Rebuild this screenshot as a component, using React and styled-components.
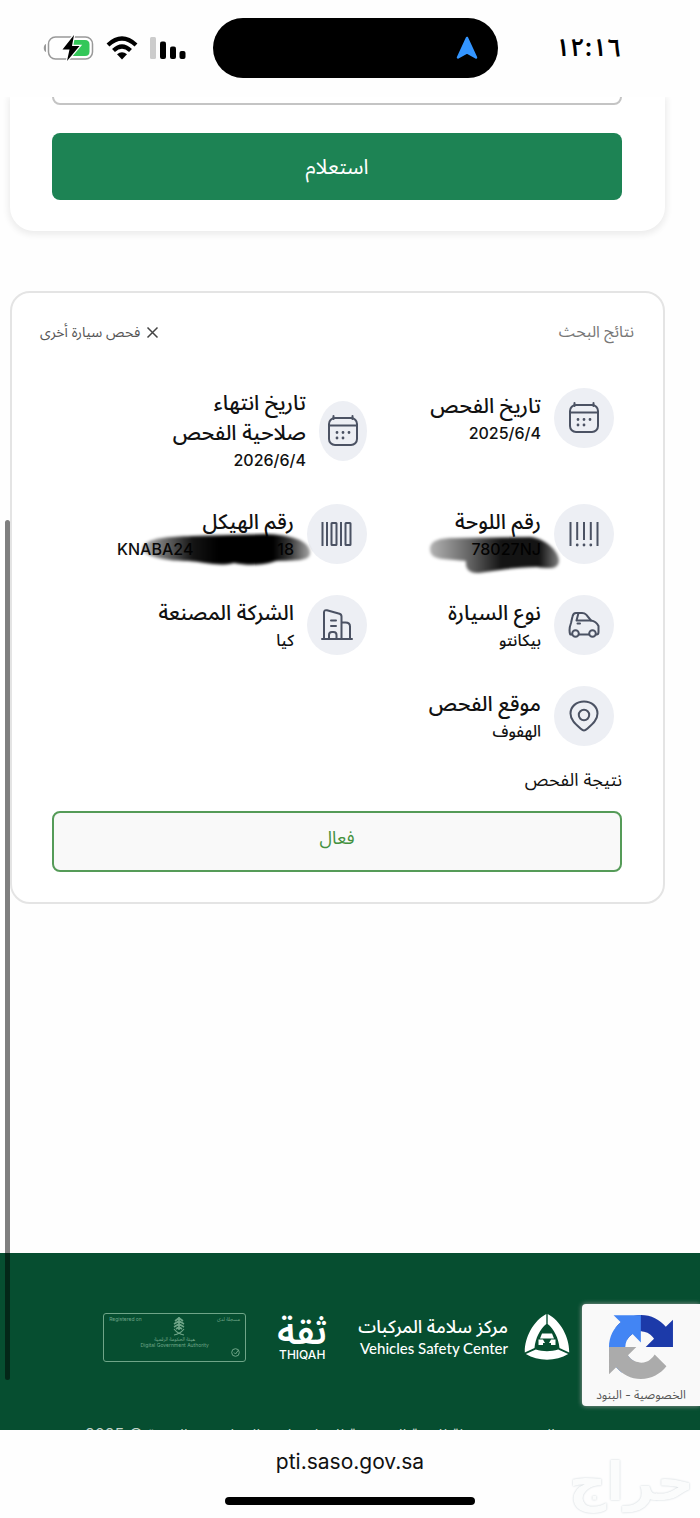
import React from "react";
import styled, { createGlobalStyle } from "styled-components";

const GlobalStyle = createGlobalStyle`
  * {
    box-sizing: border-box;
  }

  body {
    margin: 0;
    background-color: #fefefe;
    color: #111;
    font-family: Inter, "Noto Sans Arabic", "DejaVu Sans", sans-serif;
  }
`;

const Page = styled.div`
  position: relative;
  display: flex;
  flex-direction: column;
  min-height: 100vh;
  overflow: hidden;
`;

const StatusBar = styled.header`
  display: grid;
  grid-template-columns: 1fr 285px 1fr;
  align-items: center;
  height: 97px;
  padding: 0 33px 2px 43px;
  direction: ltr;
`;

const StatusIcons = styled.div`
  display: flex;
  align-items: center;
  gap: 12px;
`;

const Island = styled.div`
  display: flex;
  align-items: center;
  justify-content: flex-end;
  height: 60px;
  padding-right: 20px;
  border-radius: 30px;
  background-color: #000;
`;

const Clock = styled.time`
  justify-self: end;
  padding-right: 46px;
  color: #000;
  font-size: 25px;
  font-weight: 600;
`;

const Main = styled.main`
  flex: 1;
  padding: 0 35px 0 10px;
`;

const SearchCard = styled.form`
  padding: 0 43px 31px 42px;
  border-radius: 0 0 24px 24px;
  background-color: #fff;
  box-shadow: 0 2px 6px 2px rgba(0, 0, 0, 0.07);
  clip-path: inset(0 -12px -12px -12px);
`;

const FieldClip = styled.div`
  display: flex;
  align-items: flex-end;
  height: 8px;
  overflow: hidden;
`;

const Field = styled.input`
  flex: 1;
  flex-shrink: 0;
  height: 60px;
  border: 2px solid #c4c4c4;
  border-radius: 8px;
  background-color: #fff;
  outline: none;
`;

const SubmitButton = styled.button`
  display: block;
  width: 100%;
  height: 67px;
  margin-top: 28px;
  border: none;
  border-radius: 8px;
  background-color: #1d8354;
  color: #fff;
  font-family: inherit;
  font-size: 21px;
  cursor: pointer;
`;

const ResultCard = styled.section`
  margin-top: 60px;
  padding: 23px 29px 30px 28px;
  border: 2px solid #e4e4e4;
  border-radius: 20px;
  background-color: #fff;
`;

const ResultHeader = styled.div`
  display: flex;
  align-items: center;
  justify-content: space-between;
  height: 32px;
`;

const ResultTitle = styled.h2`
  margin: 0;
  color: #777;
  font-size: 16px;
  font-weight: 400;
`;

const ResetButton = styled.button`
  display: flex;
  align-items: center;
  gap: 6px;
  padding: 0;
  border: none;
  background: none;
  color: #555;
  font-family: inherit;
  font-size: 14px;
  cursor: pointer;
`;

const DetailGrid = styled.dl`
  display: grid;
  grid-template-columns: 247px 1fr;
  align-items: start;
  gap: 31px 0;
  margin: 40px 20px 0 0;
`;

const Detail = styled.div`
  display: flex;
  align-items: center;
  gap: 13px;
`;

const IconCircle = styled.div`
  display: flex;
  flex-shrink: 0;
  align-items: center;
  justify-content: center;
  width: ${({ $narrow }) => ($narrow ? "48px" : "60px")};
  height: 60px;
  border-radius: 50%;
  background-color: #edeff4;
`;

const DetailText = styled.div`
  position: relative;
`;

const DetailLabel = styled.dt`
  color: #111;
  font-size: 21px;
  font-weight: 500;
  line-height: 30px;
  white-space: nowrap;
`;

const DetailValue = styled.dd`
  display: flex;
  justify-content: ${({ $spread }) => ($spread ? "space-between" : "flex-start")};
  width: ${({ $spread }) => ($spread ? "177px" : "auto")};
  margin: 0;
  direction: ${({ $spread }) => ($spread ? "ltr" : "rtl")};
  color: #111;
  font-size: 16px;
  font-weight: 500;
  line-height: 25px;
`;

const Scribble = styled.svg`
  position: absolute;
  top: 25px;
  right: -22px;
`;

const StatusLabel = styled.h3`
  margin: 20px 12px 0 0;
  font-size: 18px;
  font-weight: 400;
  line-height: 28px;
`;

const StatusBox = styled.div`
  height: 61px;
  margin: 17px 12px 0;
  border: 2px solid #559b58;
  border-radius: 8px;
  background-color: #f9f9f9;
  color: #45913f;
  font-size: 18px;
  line-height: 50px;
  text-align: center;
`;

const Footer = styled.footer`
  position: relative;
  height: 177px;
  padding: 56px 130px 0 0;
  background-color: #064e30;
  color: #fff;
`;

const FooterLogos = styled.div`
  display: flex;
  align-items: center;
  gap: 29px;
  height: 56px;
`;

const CenterLogo = styled.a`
  display: flex;
  align-items: center;
  gap: 16px;
  color: inherit;
  text-decoration: none;
`;

const CenterName = styled.span`
  display: flex;
  flex-direction: column;
  font-family: Lato, "Noto Sans Arabic", "DejaVu Sans", sans-serif;
  font-size: 15px;
  font-weight: 500;
  line-height: 22px;
  white-space: nowrap;
`;

const CenterArabic = styled.span`
  font-size: 18px;
`;

const ThiqahLogo = styled.a`
  display: flex;
  flex-direction: column;
  align-items: center;
  width: 54px;
  color: inherit;
  text-decoration: none;
`;

const ThiqahArabic = styled.span`
  font-size: 36px;
  font-weight: 600;
  line-height: 36px;
`;

const ThiqahLatin = styled.span`
  font-size: 12px;
  font-weight: 500;
  line-height: 12px;
`;

const Registered = styled.div`
  display: flex;
  flex-direction: column;
  align-items: center;
  width: 143px;
  height: 49px;
  padding: 2px 5px;
  border: 1px solid #6fa588;
  border-radius: 3px;
  color: #6fa588;
  font-size: 5px;
  line-height: 6px;
`;

const RegisteredTop = styled.div`
  display: flex;
  justify-content: space-between;
  width: 100%;
`;

const RegisteredSeal = styled.svg`
  align-self: flex-start;
`;

const Copyright = styled.p`
  height: 8px;
  margin: 57px 15px 0 0;
  overflow: hidden;
  color: #c3d5cb;
  font-size: 16px;
  line-height: 24px;
  white-space: nowrap;
`;

const CaptchaBadge = styled.aside`
  position: absolute;
  top: 51px;
  right: 0;
  display: flex;
  flex-direction: column;
  align-items: center;
  width: 118px;
  height: 102px;
  padding-top: 11px;
  border-radius: 4px 0 0 4px;
  background-color: #f9f9f9;
  box-shadow: 0 0 5px #999;
`;

const CaptchaLinks = styled.div`
  margin-top: 7px;
  color: #555;
  font-size: 12px;
  line-height: 18px;
  white-space: nowrap;

  a {
    color: inherit;
    text-decoration: none;
  }
`;

const AddressBar = styled.div`
  position: relative;
  display: flex;
  flex-direction: column;
  align-items: center;
  height: 88px;
  padding-top: 16px;
  background-color: #fefefe;
`;

const Address = styled.a`
  color: #111;
  font-size: 21px;
  line-height: 32px;
  text-decoration: none;
`;

const HomeIndicator = styled.div`
  width: 250px;
  height: 8px;
  margin-top: 19px;
  border-radius: 4px;
  background-color: #000;
`;

const Watermark = styled.span`
  position: absolute;
  right: 6px;
  bottom: 8px;
  color: #fbfcfc;
  font-family: "DejaVu Sans", sans-serif;
  font-size: 52px;
  font-weight: 700;
  line-height: 56px;
  text-shadow: 0 0 2px #c3ccd2;
`;

const ScrollThumb = styled.div`
  position: absolute;
  top: 520px;
  left: 5px;
  width: 5px;
  height: 860px;
  border-radius: 3px;
  background-color: rgba(0, 0, 0, 0.5);
`;

const LineIcon = ({ children }) => (
  <svg
    width="32"
    height="32"
    viewBox="0 0 32 32"
    fill="none"
    stroke="#4b5263"
    strokeWidth="2"
    strokeLinecap="round"
    strokeLinejoin="round"
    aria-hidden="true"
  >
    {children}
  </svg>
);

const CalendarIcon = () => (
  <LineIcon>
    <rect x="2" y="3" width="28" height="27" rx="6" />
    <path d="M2 10.500h28M6.500 1v3M25.500 1v3" />
    <path
      d="M10 17.500h.01M16 17.500h.01M22 17.500h.01M10 23h.01M16 23h.01"
      strokeWidth="2.800"
    />
  </LineIcon>
);

const PlateIcon = () => (
  <LineIcon>
    <path d="M2.500 4v24M9.200 4v18M16 4v18M22.800 4v18M29.500 4v24" strokeLinecap="butt" />
    <path d="M9.200 27h.01M16 27h.01M22.800 27h.01" strokeWidth="2.800" />
  </LineIcon>
);

const ChassisIcon = () => (
  <LineIcon>
    <path d="M1.500 4v24M6 4v24M20 4v24" strokeLinecap="butt" />
    <rect x="10.500" y="5" width="5" height="22" rx="0.500" />
    <rect x="24.500" y="5" width="5" height="22" rx="0.500" />
  </LineIcon>
);

const CarIcon = () => (
  <LineIcon>
    <path d="M4 25.500H2.200C1 22 1.500 18 3 14L4.500 7.500C5 5 6 4 8 4h6c2 0 3 .4 4.200 1.600L23 11.500c4 .6 6 2.500 7.500 5.500v6c0 1.500-.5 2.500-2 2.500M11 25.500h10" />
    <path d="M10.500 4L8.500 11.500H23M9.500 14.500h2.500" />
    <circle cx="7.500" cy="24.500" r="3.300" />
    <circle cx="24.500" cy="24.500" r="3.300" />
  </LineIcon>
);

const BuildingIcon = () => (
  <LineIcon>
    <path d="M1 30h30M3 30V3.500C3 1.500 4 .8 6 1.300l12.500 3.400c1.500.4 2 1 2 2.800V30M20.500 13.500h4c3 0 4.500 1 4.500 4V30" />
    <path d="M10 11.500h5M10 17h5M8 30v-4c0-2 1-3 3-3h1.500c2 0 3 1 3 3v4" />
  </LineIcon>
);

const PinIcon = () => (
  <LineIcon>
    <path d="M16 30.500c-1.200 0-2.200-.8-3.200-1.700C7 23.500 2.500 19.500 2.500 13.500 2.500 6.500 8.500 1.500 16 1.500s13.500 5 13.500 12c0 6-4.500 10-10.300 15.300-1 .9-2 1.700-3.200 1.700z" />
    <circle cx="16" cy="15" r="5.200" />
  </LineIcon>
);

const BatteryIcon = () => (
  <svg width="51" height="28" viewBox="0 0 51 28" aria-hidden="true">
    <path d="M3 10C0 11 0 17 3 18z" fill="#999" />
    <rect x="5.500" y="3" width="44" height="22" rx="7" fill="#fff" stroke="#999" strokeWidth="1.500" />
    <path d="M29 6h13c3 0 4.500 1.500 4.500 4.500v7c0 3-1.500 4.500-4.500 4.500H27z" fill="#34c759" />
    <path
      d="M31 1L19.500 15.500h7L24 27 36.500 12h-7.500z"
      fill="#000"
      stroke="#fff"
      strokeWidth="2.500"
      paintOrder="stroke"
    />
  </svg>
);

const WifiIcon = () => (
  <svg width="32" height="24" viewBox="0 0 32 24" aria-hidden="true">
    <path d="M2 9Q16-4 30 9M7.500 14.500Q16 6.500 24.500 14.500" fill="none" stroke="#000" strokeWidth="4.200" />
    <path d="M11 18.300Q16 14 21 18.300L16 23.500z" fill="#000" />
  </svg>
);

const SignalIcon = () => (
  <svg width="36" height="24" viewBox="0 0 36 24" aria-hidden="true">
    <rect x="0" y="1" width="6" height="22" rx="1.500" fill="#ccc" />
    <rect x="10" y="5.500" width="6" height="17.500" rx="2" />
    <rect x="20" y="10.500" width="6" height="12.500" rx="2" />
    <rect x="29.500" y="15" width="6" height="8" rx="2" />
  </svg>
);

const LocationIcon = () => (
  <svg width="22" height="24" viewBox="0 0 22 24" aria-hidden="true">
    <path
      d="M11 2L20 21.500 11 16.500 2 21.500z"
      fill="#3395ff"
      stroke="#3395ff"
      strokeWidth="2.500"
      strokeLinejoin="round"
    />
  </svg>
);

const SafetyLogo = () => (
  <svg width="46" height="48" viewBox="0 0 46 48" aria-hidden="true">
    <path
      d="M22.300 1v10C16 16 11.500 25 10.500 35L.8 39.500C.5 25 9 8 22.300 1zM23.700 1v10c6.300 5 10.800 14 11.800 24l9.700 4.500C45.500 25 37 8 23.700 1zM1.800 41l10-4.500c7 2.300 15.400 2.300 22.400 0l10 4.500C32 48.500 14 48.500 1.800 41z"
      fill="#fff"
    />
    <path d="M18 20.500h10l2 5H16zM14.500 26.500h4.500l2 3.500h-2v2h-4.500zM31.500 26.500H27l-2 3.500h2v2h4.500z" fill="#fff" />
  </svg>
);

const CaptchaLogo = () => (
  <svg width="64" height="64" viewBox="0 0 64 64" aria-hidden="true">
    <path
      fill="#1c3aa9"
      d="M64 31.955l-.033-1.370V4.687l-7.160 7.160C50.948 4.674 42.033.093 32.050.093c-10.400 0-19.622 4.960-25.458 12.640l11.736 11.860a15.550 15.550 0 0 1 4.754-5.334c2.050-1.600 4.952-2.906 8.968-2.906.485 0 .860.057 1.135.163 4.976.393 9.288 3.140 11.828 7.124l-8.307 8.307L64 31.953"
    />
    <path
      fill="#4285f4"
      d="M31.862.094l-1.370.033H4.594l7.160 7.160C4.580 13.147 0 22.060 0 32.046c0 10.400 4.960 19.622 12.640 25.458L24.500 45.768a15.550 15.550 0 0 1-5.334-4.754c-1.600-2.050-2.906-4.952-2.906-8.968 0-.485.057-.860.163-1.135.393-4.976 3.140-9.288 7.124-11.828l8.307 8.307L31.860.095"
    />
    <path
      fill="#ababab"
      d="M.001 32.045l.033 1.370v25.898l7.160-7.160c5.860 7.173 14.774 11.754 24.760 11.754 10.400 0 19.622-4.960 25.458-12.640l-11.736-11.860a15.550 15.550 0 0 1-4.754 5.334c-2.050 1.600-4.952 2.906-8.968 2.906-.485 0-.860-.057-1.135-.163-4.976-.393-9.288-3.140-11.828-7.124l8.307-8.307c-10.522.040-22.400.066-27.295-.005"
    />
  </svg>
);

const EmblemIcon = () => (
  <svg width="14" height="20" viewBox="0 0 14 20" fill="none" stroke="#6fa588" aria-hidden="true">
    <path d="M7 1v13M7 2L3 5M7 2l4 3M7 5L2 8M7 5l5 3M7 8l-5 3M7 8l5 3M7 11l-3 2M7 11l3 2" strokeWidth="1.600" />
    <path d="M2 13q4 5 10 6M12 13q-4 5-10 6" strokeWidth="1.200" />
  </svg>
);

const PlateScribble = () => (
  <Scribble width="136" height="44" viewBox="0 0 136 44" aria-hidden="true">
    <defs>
      <filter id="plateSoft" x="-10%" y="-20%" width="120%" height="140%">
        <feGaussianBlur stdDeviation="1.5" />
      </filter>
      <linearGradient id="plateInk">
        <stop offset="0" stopColor="#000" stopOpacity="0.3" />
        <stop offset="0.300" stopColor="#000" stopOpacity="0.6" />
        <stop offset="0.550" stopColor="#000" stopOpacity="0.92" />
        <stop offset="0.850" stopColor="#000" stopOpacity="0.92" />
        <stop offset="1" stopColor="#000" stopOpacity="0.500" />
      </linearGradient>
    </defs>
    <path
      d="M3 17C3 8 14 6 28 6L104 5C118 7 131 18 132 28C132 37 124 37 110 35C92 35 70 38 52 41C42 42 38 36 39 29L15 27C7 26 3 23 3 17z"
      fill="url(#plateInk)"
      filter="url(#plateSoft)"
    />
  </Scribble>
);

const ChassisScribble = () => (
  <Scribble width="180" height="44" viewBox="0 0 180 44" aria-hidden="true">
    <defs>
      <filter id="chassisSoft" x="-10%" y="-20%" width="120%" height="140%">
        <feGaussianBlur stdDeviation="1.5" />
      </filter>
      <linearGradient id="chassisInk">
        <stop offset="0" stopColor="#000" stopOpacity="0.3" />
        <stop offset="0.300" stopColor="#000" stopOpacity="0.92" />
        <stop offset="0.450" stopColor="#000" />
        <stop offset="0.780" stopColor="#000" />
        <stop offset="0.880" stopColor="#000" stopOpacity="0.78" />
        <stop offset="1" stopColor="#000" stopOpacity="0.35" />
      </linearGradient>
    </defs>
    <path
      d="M6 16C10 5 34 5 56 4L130 2C154 3 172 8 174 19C176 30 160 28 140 29C130 33 112 34 98 31C82 35 68 30 52 29C34 29 8 26 6 16z"
      fill="url(#chassisInk)"
      filter="url(#chassisSoft)"
    />
  </Scribble>
);

const details = [
  { label: "تاريخ الفحص", value: "2025/6/4", icon: <CalendarIcon /> },
  {
    label: (
      <>
        تاريخ انتهاء
        <br />
        صلاحية الفحص
      </>
    ),
    value: "2026/6/4",
    icon: <CalendarIcon />,
    narrow: true,
  },
  {
    label: "رقم اللوحة",
    value: "78027NJ",
    icon: <PlateIcon />,
    scribble: <PlateScribble />,
  },
  {
    label: "رقم الهيكل",
    value: (
      <>
        <span>KNABA24</span>
        <span>18</span>
      </>
    ),
    icon: <ChassisIcon />,
    scribble: <ChassisScribble />,
    spread: true,
  },
  { label: "نوع السيارة", value: "بيكانتو", icon: <CarIcon /> },
  { label: "الشركة المصنعة", value: "كيا", icon: <BuildingIcon /> },
  { label: "موقع الفحص", value: "الهفوف", icon: <PinIcon /> },
];

const App = () => {
  return (
    <Page dir="rtl" lang="ar">
      <GlobalStyle />

      <StatusBar>
        <StatusIcons>
          <BatteryIcon />
          <WifiIcon />
          <SignalIcon />
        </StatusIcons>
        <Island>
          <LocationIcon />
        </Island>
        <Clock>١٢:١٦</Clock>
      </StatusBar>

      <Main>
        <SearchCard onSubmit={(e) => e.preventDefault()}>
          <FieldClip>
            <Field type="text" aria-label="رقم الهيكل" />
          </FieldClip>
          <SubmitButton type="submit">استعلام</SubmitButton>
        </SearchCard>

        <ResultCard>
          <ResultHeader>
            <ResultTitle>نتائج البحث</ResultTitle>
            <ResetButton type="button">
              <svg width="13" height="13" viewBox="0 0 13 13" stroke="#444" strokeWidth="1.500" aria-hidden="true">
                <path d="M1.500 1.500l10 10M11.500 1.500l-10 10" />
              </svg>
              فحص سيارة أخرى
            </ResetButton>
          </ResultHeader>

          <DetailGrid>
            {details.map(({ label, value, icon, narrow, scribble, spread }, index) => (
              <Detail key={index}>
                <IconCircle $narrow={narrow}>{icon}</IconCircle>
                <DetailText>
                  <DetailLabel>{label}</DetailLabel>
                  <DetailValue $spread={spread}>{value}</DetailValue>
                  {scribble}
                </DetailText>
              </Detail>
            ))}
          </DetailGrid>

          <StatusLabel>نتيجة الفحص</StatusLabel>
          <StatusBox>فعال</StatusBox>
        </ResultCard>
      </Main>

      <Footer>
        <FooterLogos>
          <CenterLogo href="#center">
            <SafetyLogo />
            <CenterName>
              <CenterArabic>مركز سلامة المركبات</CenterArabic>
              <span>Vehicles Safety Center</span>
            </CenterName>
          </CenterLogo>
          <ThiqahLogo href="#thiqah">
            <ThiqahArabic>ثقة</ThiqahArabic>
            <ThiqahLatin>THIQAH</ThiqahLatin>
          </ThiqahLogo>
          <Registered>
            <RegisteredTop>
              <span>مسجلة لدى</span>
              <EmblemIcon />
              <span>Registered on</span>
            </RegisteredTop>
            <span>هيئة الحكومة الرقمية</span>
            <span>Digital Government Authority</span>
            <RegisteredSeal width="9" height="9" viewBox="0 0 9 9" fill="none" stroke="#6fa588" aria-hidden="true">
              <circle cx="4.500" cy="4.500" r="3.800" />
              <path d="M3 4.500l1.500 1.500 3-4" />
            </RegisteredSeal>
          </Registered>
        </FooterLogos>
        <Copyright>الحقوق محفوظة للهيئة السعودية للمواصفات والمقاييس والجودة © 2025</Copyright>

        <CaptchaBadge>
          <CaptchaLogo />
          <CaptchaLinks>
            <a href="#privacy">الخصوصية</a> - <a href="#terms">البنود</a>
          </CaptchaLinks>
        </CaptchaBadge>
      </Footer>

      <AddressBar>
        <Address href="https://pti.saso.gov.sa" dir="ltr">
          pti.saso.gov.sa
        </Address>
        <HomeIndicator />
        <Watermark>حراج</Watermark>
      </AddressBar>

      <ScrollThumb />
    </Page>
  );
};

export default App;
